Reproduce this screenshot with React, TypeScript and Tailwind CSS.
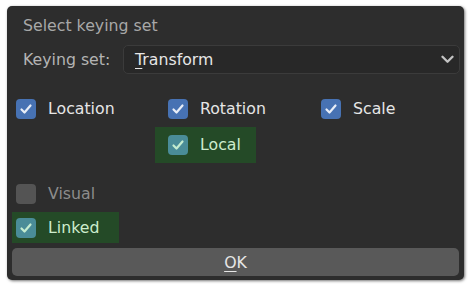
import React from 'react';

const font = { fontFamily: '"DejaVu Sans", "Liberation Sans", sans-serif' };

function Check({ green = false, checked = true }: { green?: boolean; checked?: boolean }) {
  if (!checked) {
    return <div className="w-5 h-5 shrink-0 rounded-[4px] bg-[#545454]" />;
  }
  return (
    <div
      className={`w-5 h-5 shrink-0 rounded-[4px] flex items-center justify-center ${
        green ? 'bg-[#4a8c98]' : 'bg-[#4772b3]'
      }`}
    >
      <svg width="14" height="14" viewBox="0 0 14 14" fill="none">
        <path
          d="M2.5 7.5 L5.5 10.5 L11.5 3.5"
          stroke={green ? '#c4ecd0' : '#e8eef8'}
          strokeWidth="2.2"
          strokeLinecap="round"
          strokeLinejoin="round"
        />
      </svg>
    </div>
  );
}

function Item({ label, green = false, checked = true, dim = false }: { label: string; green?: boolean; checked?: boolean; dim?: boolean }) {
  return (
    <div className="flex items-center gap-3">
      <Check green={green} checked={checked} />
      <span className={dim ? 'text-[#8c8c8c]' : green ? 'text-[#cdeccd]' : 'text-[#e6e6e6]'}>{label}</span>
    </div>
  );
}

export default function App() {
  return (
    <div className="w-[474px] h-[297px] bg-white pt-[6px] pl-[7px]" style={font}>
      <div className="w-[457px] h-[274px] rounded-[5px] bg-[#2d2d2d] shadow-[1px_1px_3px_rgba(0,0,0,0.55)] px-[5px] flex flex-col text-[15.75px] leading-5">
        <div className="h-[39px] flex items-center pl-[11px] pt-[1px] text-[#a8a8a8]">Select keying set</div>

        <div className="h-[29px] flex items-center">
          <div className="w-[111px] pl-[11px] pt-[1px] text-[#b4b4b4]">Keying set:</div>
          <div className="flex-1 h-[29px] mr-[-1px] rounded-[5px] bg-[#282828] border border-[#3b3b3b] flex items-center justify-between pl-[11px] pr-[5px] text-[#e6e6e6]">
            <span className="pt-[1px]">
              <span className="underline underline-offset-[3px] decoration-1">T</span>ransform
            </span>
            <svg width="13" height="9" viewBox="0 0 13 9" fill="none">
              <path d="M1.5 1.8 L6.5 6.8 L11.5 1.8" stroke="#c4c4c4" strokeWidth="2.3" strokeLinecap="round" strokeLinejoin="round" />
            </svg>
          </div>
        </div>

        <div className="h-[36px] mt-[17px] grid grid-cols-[152px_153px_1fr] items-center pl-[4px]">
          <Item label="Location" />
          <Item label="Rotation" />
          <Item label="Scale" />
        </div>

        <div className="h-[36px] flex pl-[143px]">
          <div className="w-[101px] h-full bg-[#244a27] flex items-center pl-[13px]">
            <Item label="Local" green />
          </div>
        </div>

        <div className="h-[36px] mt-[13px] flex items-center pl-[4px]">
          <Item label="Visual" checked={false} dim />
        </div>

        <div className="h-[31px] flex">
          <div className="w-[107px] h-full bg-[#244a27] flex items-center pl-[4px]">
            <Item label="Linked" green />
          </div>
        </div>

        <div className="h-[28px] mt-[5px] rounded-[5px] bg-[#595959] flex items-center justify-center text-[#e6e6e6]">
          <span className="pt-[1px]">
            <span className="underline underline-offset-[3px] decoration-1">O</span>K
          </span>
        </div>
      </div>
    </div>
  );
}
